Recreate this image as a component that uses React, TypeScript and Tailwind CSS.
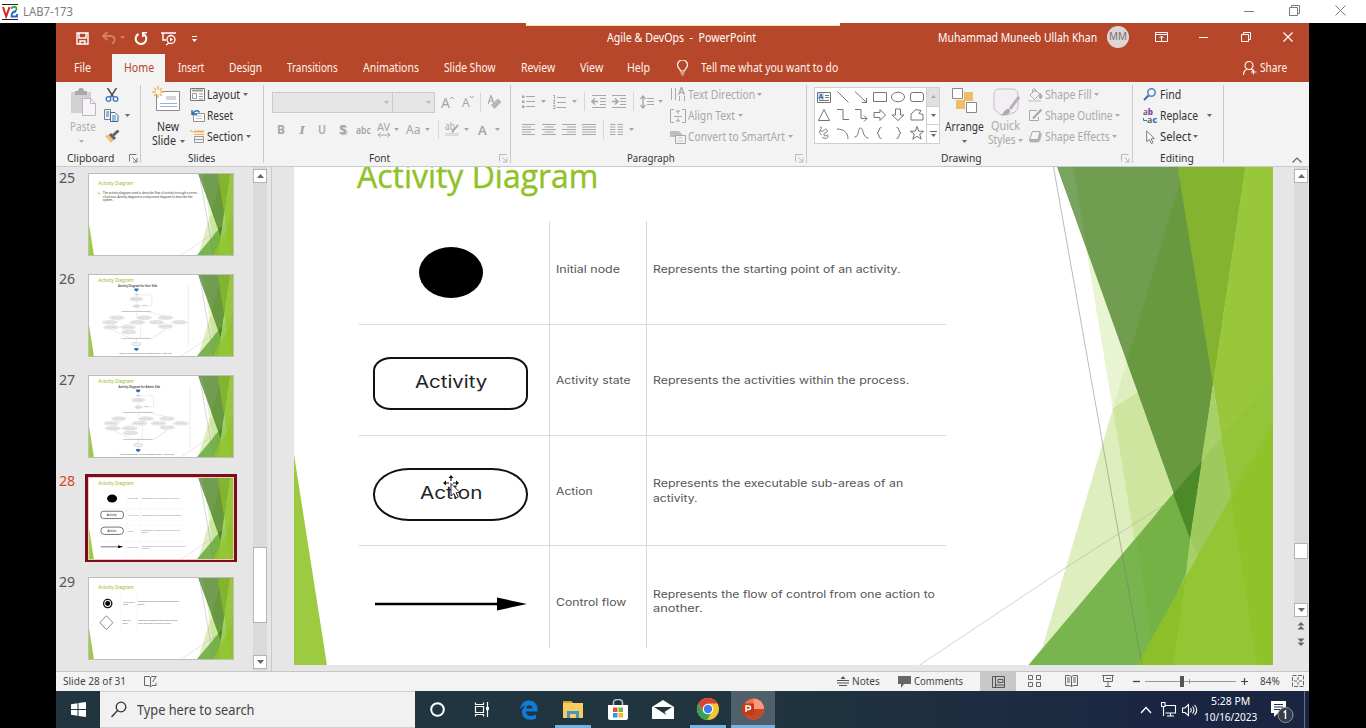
import React, { useLayoutEffect, useRef } from "react";

/* Text that is stretched or squeezed horizontally to fill the width of its box. */
function Fit({ className = "", children }: { className?: string; children: React.ReactNode }) {
  const box = useRef<HTMLSpanElement>(null);
  const inner = useRef<HTMLSpanElement>(null);
  useLayoutEffect(() => {
    if (!box.current || !inner.current) return;
    const k = box.current.clientWidth / inner.current.offsetWidth;
    inner.current.style.transform = `scaleX(${k})`;
  }, []);
  return (
    <span ref={box} className={`block shrink-0 whitespace-pre ${className}`}>
      <span ref={inner} className="inline-block origin-left">{children}</span>
    </span>
  );
}

type IconProps = { w: number; h: number; className?: string; children: React.ReactNode };
const Icon = ({ w, h, className = "", children }: IconProps) => (
  <svg width={w} height={h} viewBox={`0 0 ${w} ${h}`} fill="none" stroke="currentColor" className={`block shrink-0 ${className}`}>
    {children}
  </svg>
);

const Caret = ({ className = "" }: { className?: string }) => (
  <Icon w={5} h={3} className={className}><path d="M0 0h5L2.5 3z" fill="currentColor" stroke="none" /></Icon>
);
const Launcher = ({ className = "" }: { className?: string }) => (
  <Icon w={9} h={9} className={className}><path d="M.5 7.5v-7h7M3.5 3.500l4.500 4.500M8 4v4H4" /></Icon>
);
const Rule = () => <i className="mt-[3px] h-[78px] w-px shrink-0 bg-[#c9c9c9]" />;
const MiniRule = ({ className = "" }: { className?: string }) => <i className={`h-[19px] w-px shrink-0 bg-[#d6d6d6] ${className}`} />;

/* ---------- window chrome ---------- */
function ViewerBar() {
  return (
    <header className="flex h-[23px] items-center bg-white text-[#7b7b7b]">
      <Icon w={16} h={16} className="ml-[2px]">
        <path d="M0 .5h16M0 15.500h16" stroke="#222" />
        <path d="M1 3l3.200 9.500L7.500 3" stroke="#e02020" strokeWidth="2" />
        <path d="M9.500 5c0-3 5-3 5 0 0 2-2 2.500-2 2.500" stroke="#3aa648" strokeWidth="1.800" />
        <path d="M14 7.500c-3 0-4.500 1.500-4.500 5h5.500V10" stroke="#2368d8" strokeWidth="1.800" />
      </Icon>
      <Fit className="ml-[5px] w-[50px] text-[12px] leading-[16px]">LAB7-173</Fit>
      <Icon w={10} h={10} className="ml-auto mt-[-2px]"><path d="M0 5.500h10" /></Icon>
      <Icon w={11} h={11} className="ml-[35px] mt-[-3px]"><path d="M.5 2.500h8v8h-8zM2.500 2.500v-2h8v8h-2" /></Icon>
      <Icon w={11} h={11} className="ml-[35px] mr-[20px] mt-[-3px]"><path d="M.5.5l10 10M10.500.5l-10 10" /></Icon>
    </header>
  );
}

function TitleRow() {
  return (
    <div className="flex h-[29px] items-center text-white">
      <Icon w={13} h={13} className="ml-[20px] mt-[2px]"><path d="M1 1h11v11H1zM3 1v5h7V1M4 12V9h5v3" strokeWidth="1.400" /></Icon>
      <Icon w={14} h={12} className="ml-[13px] text-[#d48069]"><path d="M5.500 0L1 4l4.500 4M1 4h7c6 0 5.500 6 2 7.500" strokeWidth="2" /></Icon>
      <Caret className="ml-[4px] text-[#d48069]" />
      <Icon w={14} h={13} className="ml-[9px] mt-[1px]"><path d="M4.500 2A5.300 5.300 0 1 0 9 1.800" strokeWidth="2" /><path d="M8 0h5v1.500H9.700V5H8z" fill="currentColor" stroke="none" /></Icon>
      <Icon w={15} h={14} className="ml-[13px] mt-[2px]"><path d="M0 1h15M2 1v7h3M5 13l3-2" strokeWidth="1.400" /><circle cx="10" cy="7.500" r="4" strokeWidth="1.300" /><path d="M9 5.500v4l3-2z" fill="currentColor" stroke="none" /></Icon>
      <Icon w={5} h={6} className="ml-[16px] mt-[2px]"><path d="M0 .5h5" /><path d="M0 3h5L2.500 6z" fill="currentColor" stroke="none" /></Icon>
      <Fit className="ml-[410px] w-[149px] text-[12px]">{"Agile & DevOps  -  PowerPoint"}</Fit>
      <Fit className="ml-[182px] w-[159px] text-[12px]">Muhammad Muneeb Ullah Khan</Fit>
      <span className="ml-[10px] mt-[-2px] flex size-[22px] items-center justify-center rounded-full bg-[#dcd6d4] text-[#77706e]">
        <Fit className="w-[18px] text-[11px]">MM</Fit>
      </span>
      <Icon w={13} h={10} className="ml-[26px] mt-[-2px]"><path d="M.5.5h12v9H.5zM.5 2.500h12M6.500 9V4.500M4.500 6l2-2 2 2" /></Icon>
      <Icon w={10} h={10} className="ml-[31px] mt-[-2px]"><path d="M0 5.500h9" /></Icon>
      <Icon w={10} h={10} className="ml-[32px] mt-[-2px]"><path d="M.5 2.500h7v7h-7zM2.500 2.500v-2h7v7h-2" /></Icon>
      <Icon w={10} h={10} className="ml-[32px] mt-[-2px]"><path d="M.5.5l9 9M9.500.5l-9 9" strokeWidth="1.200" /></Icon>
    </div>
  );
}

function Tabs() {
  return (
    <nav className="flex h-[30px] items-end text-[12px] leading-[28px] text-[#fff3ef]">
      <Fit className="ml-[18px] w-[17px]">File</Fit>
      <span className="ml-[21px] flex h-[28px] w-[53px] justify-center bg-[#f3f3f3] text-[#b7472a]"><Fit className="w-[30px]">Home</Fit></span>
      <Fit className="ml-[13px] w-[26px]">Insert</Fit>
      <Fit className="ml-[25px] w-[33px]">Design</Fit>
      <Fit className="ml-[25px] w-[51px]">Transitions</Fit>
      <Fit className="ml-[25px] w-[56px]">Animations</Fit>
      <Fit className="ml-[25px] w-[52px]">Slide Show</Fit>
      <Fit className="ml-[25px] w-[34px]">Review</Fit>
      <Fit className="ml-[25px] w-[23px]">View</Fit>
      <Fit className="ml-[24px] w-[23px]">Help</Fit>
      <Icon w={11} h={16} className="mb-[6px] ml-[27px]"><path d="M3.500 11c0-2-3-3-3-6a5 5 0 0 1 10 0c0 3-3 4-3 6zM3.500 13h4M4.500 15h2" strokeWidth="1.200" /></Icon>
      <Fit className="ml-[13px] w-[137px]">Tell me what you want to do</Fit>
      <Icon w={14} h={14} className="mb-[7px] ml-[405px]"><circle cx="6" cy="4.500" r="4" strokeWidth="1.200" /><path d="M.5 14c0-3 1.500-5 3.500-6M8 8c1 .5 1.500 1 2 2M10.500 8.500v5M8 11h5.500" strokeWidth="1.200" /></Icon>
      <Fit className="ml-[3px] w-[27px]">Share</Fit>
    </nav>
  );
}

/* ---------- ribbon ---------- */
const GroupLabel = ({ children, pad, off }: { children: React.ReactNode; pad: string; off?: boolean | null }) => (
  <div className="mt-auto flex h-[18px] items-center pt-[2px] leading-[14px] text-[#333]">
    <span className={pad}>{children}</span>
    {off !== null && <Launcher className={`ml-auto mr-[2px] ${off ? "text-[#b9b9b9]" : "text-[#777]"}`} />}
  </div>
);
const Line = ({ children, className = "" }: { children: React.ReactNode; className?: string }) => (
  <div className={`flex h-[21px] items-center leading-[16px] ${className}`}>{children}</div>
);

function Clipboard() {
  return (
    <section className="flex w-[84px] flex-col pt-[2px]">
      <div className="flex">
        <div className="ml-[14px] w-[26px] text-[#b0b0b0]">
          <Icon w={26} h={28} className="mt-[4px]">
            <path d="M1 4h20v21H1z" fill="#d3d1d4" stroke="none" /><path d="M5 3h3a3 3 0 0 1 6 0h3v4H5z" fill="#a9a9a9" stroke="none" />
            <path d="M12.500 10.500h8l5 5v12h-13z" fill="#f6f4f6" stroke="#bdb8bd" /><path d="M20.500 10.500v5h5" stroke="#bdb8bd" />
          </Icon>
          <Fit className="mt-[3px] w-[26px] text-[12px] leading-[15px]">Paste</Fit>
          <Caret className="ml-[9px] mt-[6px]" />
        </div>
        <div className="ml-[8px]">
          <Line><Icon w={14} h={14} className="ml-px"><path d="M2.500 0l6 9M11.500 0l-6 9" stroke="#555" strokeWidth="1.600" /><circle cx="3.500" cy="11" r="2.300" stroke="#3b78c4" strokeWidth="1.300" /><circle cx="10.500" cy="11" r="2.300" stroke="#3b78c4" strokeWidth="1.300" /></Icon></Line>
          <Line>
            <Icon w={15} h={13}><path d="M.5.5h6v10h-6z" stroke="#76818f" /><path d="M2 3h3M2 5h3M2 7h3M8 6h3M8 8h4M8 10h4" stroke="#3b78c4" /><path d="M6.500 3.500h4.500l3 3v6H6.500z" stroke="#4a6588" fill="#f8faff" /><path d="M8 7h4M8 9h4M8 11h4" stroke="#3b78c4" /></Icon>
            <Caret className="ml-[6px] text-[#666]" />
          </Line>
          <Line><Icon w={15} h={14} className="ml-px"><path d="M0 6l5-2 5 5-4 4z" fill="#f0c078" stroke="none" /><path d="M5 4l5 5M8 5.500L13.500.500" stroke="#666" strokeWidth="3" /></Icon></Line>
        </div>
      </div>
      <GroupLabel pad="ml-[11px]"><Fit className="w-[47px] text-[11.500px]">Clipboard</Fit></GroupLabel>
    </section>
  );
}

function Slides() {
  return (
    <section className="flex w-[122px] flex-col pt-[2px] text-[12px] text-[#333]">
      <div className="flex">
        <div className="ml-[11px] w-[32px]">
          <Icon w={29} h={26} className="mt-[2px]">
            <path d="M4.500 5.500h23v19h-23z" fill="#fff" stroke="#8d8d8d" /><path d="M14 10h10v4H14z" fill="#d6d6d6" stroke="none" />
            <path d="M8 17.500h17M8 20.500h17" stroke="#9ab2d8" /><path d="M6 0v12M0 6h12M2 2l8 8M10 2l-8 8" stroke="#edb95e" strokeWidth="1.500" />
            <circle cx="6" cy="6" r="2.500" fill="#fff5da" stroke="none" />
          </Icon>
          <Fit className="ml-[5px] mt-[7px] w-[22px] leading-[15px]">New</Fit>
          <div className="flex items-center"><Fit className="w-[24px] leading-[14px]">Slide</Fit><Caret className="ml-[4px] text-[#666]" /></div>
        </div>
        <div className="ml-[6px]">
          <Line><Icon w={15} h={13}><path d="M.5.5h14v12H.5z" stroke="#777" fill="#fff" /><path d="M2 2.500h11" stroke="#999" strokeWidth="2" /><path d="M2.500 5.500h4v5h-4zM9 6h4M9 8.500h4M9 11h4" stroke="#999" /></Icon><Fit className="ml-[2px] w-[33px]">Layout</Fit><Caret className="ml-[3px] text-[#666]" /></Line>
          <Line><Icon w={15} h={14}><path d="M3.500 4.500h11v8h-11z" stroke="#8f8f8f" fill="#fff" /><path d="M6 7h6M6 9.500h6" stroke="#bbb" /><path d="M2 6V1M2 5.500h5M2.500 5C5 1 8 1 9.500 3.500" stroke="#3070b8" strokeWidth="1.500" /></Icon><Fit className="ml-[2px] w-[26px]">Reset</Fit></Line>
          <Line><Icon w={15} h={13}><path d="M4 1.500h10" stroke="#f0ae62" strokeWidth="2" /><path d="M4 4.500h10M0 0l3 2" stroke="#f0ae62" strokeWidth="1.200" /><path d="M4.500 6.500h9v6h-9zM5 9.500h8" stroke="#999" /></Icon><Fit className="ml-[2px] w-[36px]">Section</Fit><Caret className="ml-[3px] text-[#666]" /></Line>
        </div>
      </div>
      <GroupLabel pad="ml-[47px]" off={null}><Fit className="w-[27px] text-[11.500px]">Slides</Fit></GroupLabel>
    </section>
  );
}

function FontGroup() {
  return (
    <section className="flex w-[246px] flex-col pt-[3px] text-[#a6a6a6]">
      <div className="mt-[7px] flex h-[21px] items-center pl-[8px]">
        <span className="flex h-[21px] w-[121px] items-center justify-end border border-[#cacaca] bg-[#e6e6e6] pr-[3px] text-[#bababa]"><Caret /></span>
        <span className="flex h-[21px] w-[42px] items-center justify-end border border-l-0 border-[#cacaca] bg-[#e6e6e6] pr-[3px] text-[#bababa]"><Caret /></span>
        <Fit className="ml-[6px] w-[9px] text-[14px] leading-[16px]">A</Fit><Icon w={4} h={3} className="mb-[11px]"><path d="M0 3l2-2 2 2" /></Icon>
        <Fit className="ml-[8px] w-[8px] pt-[1px] text-[12px] leading-[16px]">A</Fit><Icon w={4} h={3} className="mb-[11px]"><path d="M0 0l2 2 2-2" /></Icon>
        <MiniRule className="ml-[6px]" />
        <Icon w={14} h={15} className="ml-[7px]"><path d="M0 9L3 .5 6 9M1.500 6h3" strokeWidth="1.200" /><path d="M3 10l7-6.500 3.500 3.500-7 7z" fill="#b5b5b5" stroke="none" /></Icon>
      </div>
      <div className="mt-[6px] flex h-[21px] items-center pl-[13px] text-[12px] leading-[16px]">
        <Fit className="w-[8px] font-bold">B</Fit>
        <Fit className="ml-[14px] w-[6px] font-['Liberation_Serif'] text-[13px] font-bold italic">I</Fit>
        <Fit className="ml-[13px] w-[8px] font-semibold underline underline-offset-2">U</Fit>
        <Fit className="ml-[13px] w-[8px] font-bold [text-shadow:1px_1px_1px_#bbb]">S</Fit>
        <Fit className="ml-[9px] w-[15px] text-[11px] font-semibold line-through">abc</Fit>
        <span className="ml-[6px] flex h-[16px] flex-col"><Fit className="w-[13px] text-[11px] leading-[10px]">AV</Fit><Icon w={14} h={6}><path d="M1 3h12M3.500.5L1 3l2.500 2.500M10.500.5L13 3l-2.500 2.500" /></Icon></span>
        <Caret className="ml-[3px]" />
        <Fit className="ml-[7px] w-[14px]">Aa</Fit>
        <Caret className="ml-[5px]" />
        <MiniRule className="ml-[8px]" />
        <span className="ml-[6px] flex h-[16px] flex-col"><Fit className="w-[10px] text-[10px] leading-[9px]">ab</Fit><i className="mt-[2px] h-[3px] w-[14px] bg-[#dcdcdc]" /></span>
        <Icon w={8} h={9} className="ml-[-8px] mb-[3px]"><path d="M7 1L2 7l-1 1.500" strokeWidth="1.800" /></Icon>
        <Caret className="ml-[5px]" />
        <Fit className="ml-[9px] w-[9px] text-[13px] font-semibold">A</Fit>
        <Caret className="ml-[8px]" />
      </div>
      <GroupLabel pad="ml-[105px]" off><Fit className="w-[21px] text-[11.500px]">Font</Fit></GroupLabel>
    </section>
  );
}

const Bars = ({ d }: { d: string }) => <Icon w={14} h={11}><path d={d} /></Icon>;

function Paragraph() {
  return (
    <section className="flex w-[295px] flex-col pt-[2px] text-[#a8a8a8]">
      <div className="flex h-[63px]">
        <div className="w-[159px]">
          <div className="mt-[7px] flex h-[21px] items-center pl-[10px]">
            <Icon w={14} h={14}><path d="M5 1.500h9M5 6.500h9M5 11.500h9" /><path d="M1 0.500h2.500V3H1zM1 5.500h2.500V8H1zM1 10.500h2.500V13H1z" fill="currentColor" stroke="none" /></Icon>
            <Caret className="ml-[6px]" />
            <Icon w={14} h={14} className="ml-[6px]"><path d="M5 2.500h9M5 7.500h9M5 12.500h9M1 .5h1.500v3.500M1 5.500h2l-1.500 3H3M1 10.500h2v3H1" /></Icon>
            <Caret className="ml-[6px]" />
            <MiniRule className="ml-[7px]" />
            <Icon w={16} h={13} className="ml-[6px]"><path d="M1 .5h14M9 3.500h6M9 6.500h6M9 9.500h6M1 12.500h14" /><path d="M7 6.500H1.500M4 3.500l-3 3 3 3" strokeWidth="1.600" /></Icon>
            <Icon w={16} h={13} className="ml-[4px]"><path d="M1 .5h14M9 3.500h6M9 6.500h6M9 9.500h6M1 12.500h14" /><path d="M1 6.500h6M4 3.500l3 3-3 3" strokeWidth="1.600" /></Icon>
            <MiniRule className="ml-[6px]" />
            <Icon w={14} h={14} className="ml-[6px]"><path d="M3 1v12M.5 4L3 1l2.500 3M.5 10L3 13l2.500-3" strokeWidth="1.300" /><path d="M7 3.500h7M7 6.500h7M7 9.500h7" /></Icon>
            <Caret className="ml-[4px]" />
          </div>
          <div className="mt-[7px] flex h-[21px] items-center gap-[6px] pl-[11px]">
            <Bars d="M0 .5h13M0 3h9M0 5.500h13M0 8h9M0 10.500h13" />
            <Bars d="M0 .5h14M2.500 3h9M0 5.500h14M2.500 8h9M0 10.500h14" />
            <Bars d="M0 .5h14M5 3h9M0 5.500h14M5 8h9M0 10.500h14" />
            <Bars d="M0 .5h14M0 3h14M0 5.500h14M0 8h14M0 10.500h14" />
            <MiniRule className="ml-px" />
            <Icon w={13} h={11}><path d="M0 .5h5.500M0 3h5.500M0 5.500h5.500M0 8h5.500M0 10.500h5.500M7.500.5H13M7.500 3H13M7.500 5.500H13M7.500 8H13M7.500 10.500H13" /></Icon>
            <Caret />
          </div>
        </div>
        <div className="text-[12px]">
          <Line><Icon w={16} h={15}><path d="M1.500 1v12M5.500 1v12M9.500 9v5M14.500 9v5" /><path d="M8.500 8L11.500 0l3 8M9.500 5.500h4" strokeWidth="1.300" /></Icon><Fit className="ml-[2px] w-[67px]">Text Direction</Fit><Caret className="ml-[2px]" /></Line>
          <Line><Icon w={16} h={14}><path d="M4 .5H.5v13H4M12 .5h3.500v13H12M8 1v4M8 9v4M6 3l2-2 2 2M6 11l2 2 2-2M4 7.500h8" /></Icon><Fit className="ml-[2px] w-[47px]">Align Text</Fit><Caret className="ml-[3px]" /></Line>
          <Line><Icon w={16} h={14}><path d="M0 1h9l3 3v3H0z" fill="#bdbdbd" stroke="none" /><path d="M5.500 5.500h10v8h-10z" fill="#f3f3f3" /><path d="M8 8h5M8 11h5" stroke="#ccc" /></Icon><Fit className="ml-[2px] w-[97px]">Convert to SmartArt</Fit><Caret className="ml-[3px]" /></Line>
        </div>
      </div>
      <GroupLabel pad="ml-[116px]" off><Fit className="w-[48px] text-[11.500px]">Paragraph</Fit></GroupLabel>
    </section>
  );
}

const shapePaths = [
  "M1.500 3.500h13v10h-13zM9 6.500h4M9 8.500h4M3 11.500h10",
  "M2.500 2.500l11 11",
  "M2 2.500l11.500 11M13.500 9v4.500H9",
  "M1.500 3.500h13v9h-13z",
  "M1.500 8a6.500 4.800 0 1 0 13 0a6.500 4.800 0 1 0-13 0",
  "M3.500 3.500h9q2 0 2 2.500v4q0 2.500-2 2.500h-9q-2 0-2-2.500V6q0-2.500 2-2.500",
  "M8 2.500l5.500 11h-11z",
  "M2 2.500h6v10h6",
  "M2 2.500h6v9h6M11 8.500l3 3-3 3",
  "M2 5.500h6V2.500l5.500 5.500L8 13.500v-3H2z",
  "M5.500 2v6h-3.500l6 5.500 6-5.500h-3.500V2z",
  "M2 13V7l5-4.500 5 1-2 3 4 1v5.500z",
  "M4 2c5 1-3 3 1 4s4-4 6-1-4 2-3 5 4-2 4 1-4 3-6 1M4 6c-2 2 1 3 2 4",
  "M2 4c6 0 11 3 11 10",
  "M1.500 12c5 0 3-9 6-9s2 10 8 10",
  "M9.500 2.500Q7 2.500 7 5t-2 3q2 .5 2 3t2.500 2.500",
  "M6.500 2.500Q9 2.500 9 5t2 3q-2 .5-2 3t-2.500 2.500",
  "M8 1.500l1.700 4.700h5l-4 3 1.500 5L8 11.300 3.800 14.200l1.500-5-4-3h5z",
];

function Drawing() {
  return (
    <section className="flex w-[325px] flex-col pt-[2px] text-[12px]">
      <div className="flex h-[63px]">
        <div className="ml-[7px] mt-[3px] flex h-[57px] w-[126px] border border-[#cfcfcf] bg-white">
          <div className="grid w-[111px] grid-cols-6 grid-rows-3 place-items-center pb-px text-[#747474]">
            {shapePaths.map((d, i) => <Icon key={i} w={16} h={16}>{i === 0 && <path d="M2 4h6v7H2z" fill="#cfdcf0" stroke="none" />}<path d={d} />{i === 0 && <path d="M3 10l2-5 2 5M4 8.500h2.500" stroke="#2b5fa8" />}</Icon>)}
          </div>
          <div className="flex flex-1 flex-col divide-y divide-[#cfcfcf] border-l border-[#cfcfcf] text-[#666]">
            <span className="flex flex-1 items-center justify-center bg-[#e0e0e0] text-[#aaa]"><Caret className="rotate-180" /></span>
            <span className="flex flex-1 items-center justify-center"><Caret /></span>
            <span className="flex flex-1 flex-col items-center justify-center gap-[2px]"><i className="h-px w-[7px] bg-[#666]" /><Caret /></span>
          </div>
        </div>
        <div className="ml-[5px] flex w-[39px] flex-col items-center text-[#333]">
          <Icon w={25} h={25} className="mt-[4px]"><path d="M12 4h9v9h-9zM4 12h9v9H4z" fill="#eebd68" stroke="none" /><path d="M.5.5h10v10H.500zM14.500 14.500h10v10h-10z" fill="#fff" stroke="#888" /></Icon>
          <Fit className="mt-[6px] w-[39px] leading-[15px]">Arrange</Fit>
          <Caret className="mt-[6px] text-[#666]" />
        </div>
        <div className="ml-[4px] w-[36px] text-[#a9a9a9]">
          <Icon w={27} h={28} className="ml-[5px] mt-[4px]"><path d="M6 1h13q6 0 6 6v11q0 4-3 6L14 27H8l-7-6V6q0-5 5-5z" fill="#f4eff5" stroke="#c7bcc8" /><path d="M26 9l-9 12M26.500 8" stroke="#b5b5b5" strokeWidth="3" /><path d="M7 27c4 0 4-7 9-6 3 3-1 7-9 6z" fill="#a9a9a9" stroke="none" /></Icon>
          <Fit className="ml-[3px] mt-[3px] w-[29px] leading-[14px]">Quick</Fit>
          <div className="flex items-center"><Fit className="w-[28px] leading-[14px]">Styles</Fit><Caret className="ml-[2px]" /></div>
        </div>
        <div className="ml-[4px] text-[#a9a9a9]">
          <Line><Icon w={15} h={14}><path d="M7 2L2 7l4.500 4.500L12 6zM4.500 5V1.500q2-2 3 0V4" /><path d="M12.500 5.500q3 4 0 5-2 0 0-5" fill="#aaa" /><path d="M0 12h13v2H0z" fill="#d8d8d8" stroke="none" /></Icon><Fit className="ml-[2px] w-[47px]">Shape Fill</Fit><Caret className="ml-[2px]" /></Line>
          <Line><Icon w={15} h={13}><path d="M9 1.500H1.500v10h9V8" /><path d="M13.500.5L5 9.500" strokeWidth="2.200" /></Icon><Fit className="ml-[2px] w-[68px]">Shape Outline</Fit><Caret className="ml-[2px]" /></Line>
          <Line><Icon w={15} h={13}><path d="M4 2h8l2 2-2 7-2 1.500H2L1 10z" fill="#b5b5b5" stroke="none" /><path d="M4.500 1.500h7.500l-2 8H1.500z" fill="#f5f5f5" strokeLinejoin="round" /></Icon><Fit className="ml-[2px] w-[65px]">Shape Effects</Fit><Caret className="ml-[2px]" /></Line>
        </div>
      </div>
      <GroupLabel pad="ml-[134px]" off><Fit className="w-[41px] text-[11.500px]">Drawing</Fit></GroupLabel>
    </section>
  );
}

function Editing() {
  return (
    <section className="flex w-[90px] flex-col pt-[2px] text-[12px] text-[#333]">
      <Line className="pl-[10px]"><Icon w={14} h={13}><circle cx="8.500" cy="4.500" r="3.700" stroke="#4c86cf" strokeWidth="1.600" /><path d="M5.500 7.500L1 12" stroke="#4c6ea8" strokeWidth="2.200" /></Icon><Fit className="ml-[3px] w-[21px]">Find</Fit></Line>
      <Line className="pl-[10px]">
        <span className="flex w-[14px] flex-col text-[9px] leading-[8px]"><Fit className="w-[10px] font-semibold text-[#555]">a<b className="text-[#8650a8]">b</b></Fit><span className="flex"><Icon w={4} h={5} className="mt-[2px]"><path d="M.5 0v2.500H4" stroke="#3b78c4" /></Icon><Fit className="w-[10px] font-semibold text-[#555]">a<b className="text-[#3b78c4]">c</b></Fit></span></span>
        <Fit className="ml-[3px] w-[38px]">Replace</Fit><Caret className="ml-[9px] text-[#666]" />
      </Line>
      <Line className="pl-[13px]"><Icon w={9} h={14}><path d="M.7 1v10.500l2.600-2 2 4 1.700-.8-1.900-3.900 3.200-.3z" stroke="#777" fill="#fff" /></Icon><Fit className="ml-[5px] w-[31px]">Select</Fit><Caret className="ml-[2px] text-[#666]" /></Line>
      <GroupLabel pad="ml-[27px]" off={null}><Fit className="w-[34px] text-[11.500px]">Editing</Fit></GroupLabel>
    </section>
  );
}

function Ribbon() {
  return (
    <div className="flex h-[85px] border-b border-[#c9c9c9] bg-[#f3f3f3]">
      <Clipboard /><Rule /><Slides /><Rule /><FontGroup /><Rule /><Paragraph /><Rule /><Drawing /><Rule /><Editing /><Rule />
      <Icon w={10} h={6} className="ml-auto mr-[7px] mt-[75px] text-[#666]"><path d="M.5 5.500L5 1l4.500 4.500" strokeWidth="1.200" /></Icon>
    </div>
  );
}

/* ---------- slides ---------- */
function Facets({ thin = 1 }: { thin?: number }) {
  return (
    <g transform="translate(-294 -114.500)" stroke="none">
      <path d="M1064 114l91 552h119V114z" fill="#e9f4d3" />
      <path d="M1200 114L1037 666h237V114z" fill="#deeebf" />
      <path d="M1113 409l42 257h119V300z" fill="#cde59f" />
      <path d="M1038 114h215l-63 425z" fill="#719d50" />
      <path d="M1038 114h26l23 136z" fill="#78a45f" />
      <path d="M1200 114l-73 248 63 177 63-425z" fill="#68993e" />
      <path d="M1169 114l44 271 40-271z" fill="#84b330" />
      <path d="M1253 114l-40 271 18 112 43 60V114z" fill="#99c73b" />
      <path d="M1213 385l-42 281 60-169z" fill="#a7d168" />
      <path d="M1028 666l145-171.500 17 44.500-4 36-40 91z" fill="#79b54e" />
      <path d="M1137 540l22-29 14-16.500 17 44.500-5 34-32 80z" fill="#75b245" />
      <path d="M1173 494.500l29-33-12 77.500z" fill="#4c8927" />
      <path d="M1202 461.500l19.500-23.500 10 59-33 60-8-18z" fill="#9eca5d" />
      <path d="M1221.500 438l52.500-61v90l-42.500 30z" fill="#94c439" />
      <path d="M1137 666L1274 421v245z" fill="#8fc329" />
      <path d="M1137 666l49-89-13 89z" fill="#8bc02b" />
      <path d="M1186 577l45-80 26 169h-84z" fill="#94c534" />
      <path d="M1044 114l98 552" fill="none" stroke="#777" strokeOpacity=".5" strokeWidth={thin} />
      <path d="M919 666l147-98 100-64" fill="none" stroke="#a9a9a9" strokeOpacity=".5" strokeWidth={thin} />
      <path d="M294 455l33 211h-33z" fill="#9ccb42" />
    </g>
  );
}

const rows = [
  { name: "Initial node", nw: "w-[64px]", lines: [["Represents the starting point of an activity.", "w-[248px]"]], h: "h-[104px]", namePad: "pb-[4px]", textPad: "pb-[4px]" },
  { name: "Activity state", nw: "w-[75px]", lines: [["Represents the activities within the process.", "w-[256px]"]], h: "h-[111px]", namePad: "pt-[3px]", textPad: "pt-[3px]" },
  { name: "Action", nw: "w-[37px]", lines: [["Represents the executable sub-areas of an", "w-[250px]"], ["activity.", "w-[44px]"]], h: "h-[110px]", namePad: "pt-[4px]", textPad: "pt-[2px]" },
  { name: "Control flow", nw: "w-[70px]", lines: [["Represents the flow of control from one action to", "w-[282px]"], ["another.", "w-[49px]"]], h: "h-[102px]", namePad: "pt-[12px]", textPad: "pt-[10px]" },
];

function Symbol({ i }: { i: number }) {
  if (i === 0) return <span className="h-[51px] w-[64px] rounded-[50%] bg-black" />;
  if (i === 3) return <Icon w={152} h={14} className="mt-[14px]"><path d="M0 7h125" stroke="#000" strokeWidth="2.400" /><path d="M122 .5L152 7l-30 6.500z" fill="#000" stroke="none" /></Icon>;
  return (
    <span className={`mr-px flex w-[155px] items-center justify-center border-2 border-[#111] ${i === 1 ? "mt-[6px] h-[53px] rounded-[18px/14px]" : "mt-[7px] h-[53px] rounded-[36px/26px]"}`}>
      <Fit className={`mt-[-2px] text-[17px] leading-[20px] text-[#222] ${i === 1 ? "w-[72px]" : "w-[62px]"}`}>{i === 1 ? "Activity" : "Action"}</Fit>
    </span>
  );
}

function MainSlide() {
  return (
    <div className="relative h-[498px] w-[979px] overflow-hidden bg-white">
      <svg width="980" height="551" viewBox="0 0 980 551" className="absolute bottom-0 left-0"><Facets /></svg>
      <div className="relative pl-[63px] font-['Open_Sans']"><Fit className="mt-[-13px] w-[241px] text-[33px] leading-[44px] text-[#90c226] [-webkit-text-stroke:0.4px_#90c226]">Activity Diagram</Fit></div>
      <div className="relative ml-[65px] mt-[23px] w-[587px] font-['Inter'] text-[10.500px] leading-[14.500px] text-[#555]">
        {rows.map((r, i) => (
          <div key={r.name} className={`flex ${r.h} ${i < 3 ? "border-b border-[#d9d9d9]" : ""}`}>
            <div className="flex w-[184px] shrink-0 items-center justify-center"><Symbol i={i} /></div>
            <div className={`ml-[6px] flex w-[97px] items-center border-l border-[#d9d9d9] pl-[6px] ${r.namePad}`}><Fit className={r.nw}>{r.name}</Fit></div>
            <div className={`flex flex-1 flex-col justify-center border-l border-[#d9d9d9] pl-[6px] ${r.textPad}`}>
              {r.lines.map(([t, w]) => <Fit key={t} className={w}>{t}</Fit>)}
            </div>
          </div>
        ))}
      </div>
      <svg width="18" height="24" viewBox="0 0 18 24" className="absolute left-[149px] top-[308px]">
        <path d="M8 0l2.500 3h-5zM0 8l3-2.500v5zM16 8l-3-2.500v5z" fill="#111" /><path d="M8 2v4M2 8h4M10 8h4" stroke="#111" strokeWidth="1.200" />
        <path d="M8 8.500v12.500l3-2.500 2 4.500 2.200-1-2-4.300 3.800-.2z" fill="#fff" stroke="#111" strokeWidth=".9" />
      </svg>
    </div>
  );
}

const small = "'Noto Sans', sans-serif";
const bubbles = [[190, 290], [375, 290], [520, 290], [140, 322], [330, 322], [460, 322], [615, 322], [150, 356], [265, 356], [520, 350], [270, 388]];

function FlowArt({ name, shift }: { name: string; shift: number }) {
  return (
    <g fontFamily={small} transform={`translate(${shift} 0)`}>
      <text x="330" y="82" textAnchor="middle" fontSize="18" fontWeight="bold" fill="#555">{`Activity Diagram for ${name} Side`}</text>
      <g stroke="#c2c2c2" strokeWidth="3" fill="#f1f1f1">
        <path d="M322 105v125M322 135h105v75h-95M230 248h190M400 250L540 285M322 250v30M210 300L150 350M370 300l-180 60M560 330l-120 100M350 330v100M150 370l130 60h150l90-60M322 430v60M675 70v420" fill="none" stroke="#d5d5d5" />
        <path d="M220 248h200M220 432h200" stroke="#aaa" strokeWidth="4" />
        {bubbles.map(([x, y], i) => <ellipse key={i} cx={x} cy={y} rx="50" ry="12" />)}
        <ellipse cx="322" cy="164" rx="46" ry="12" /><ellipse cx="322" cy="212" rx="24" ry="9" /><ellipse cx="322" cy="470" rx="34" ry="12" />
      </g>
      <g stroke="#666" strokeOpacity=".6" strokeWidth="3">
        {bubbles.map(([x, y], i) => <path key={i} d={`M${x - 34} ${y}h68`} strokeDasharray="12 4 20 5" />)}
        <path d="M290 164h62M308 133h30M308 212h28M365 207h30" />
      </g>
      <path d="M308 92h28v12l-14 8-14-8zM308 497h28v12l-14 8-14-8z" fill="#2f6fb5" />
      <text x="380" y="537" textAnchor="middle" fontSize="14" fill="#555">{`Activity diagram for online language system - ${name} side`}</text>
    </g>
  );
}

function ThumbArt({ n }: { n: number }) {
  const high = n === 26 || n === 27;
  return (
    <svg width="144" height="81" viewBox="0 0 979 551" className="block bg-white" fontFamily={small}>
      <Facets thin={4} />
      <text x="63" y={high ? 46 : n === 28 ? 50 : 75} fontSize="32" textLength="241" fill="#90c226">Activity Diagram</text>
      {n === 25 && (
        <g fontSize="21" fill="#444">
          <path d="M64 124l14 7-14 7z" fill="#90c226" />
          <text x="94" y="139" textLength="640">The activity diagram used to describe flow of activity through a series</text>
          <text x="94" y="163" textLength="610">of actions. Activity diagram is a important diagram to describe the</text>
          <text x="94" y="183" textLength="68">system.</text>
        </g>
      )}
      {n === 26 && <FlowArt name="User" shift={0} />}
      {n === 27 && <FlowArt name="Admin" shift={12} />}
      {n === 28 && (
        <g fontSize="13" fill="#777">
          <path d="M65 210h585M65 321h585M65 431h585M255 107v425M352 107v425" stroke="#ececec" strokeWidth="3" />
          <ellipse cx="157" cy="140" rx="34" ry="27" fill="#000" />
          <rect x="80" y="226" width="154" height="50" rx="18" fill="none" stroke="#444" strokeWidth="5" />
          <rect x="80" y="334" width="154" height="50" rx="26" fill="none" stroke="#444" strokeWidth="5" />
          <path d="M80 468h130" stroke="#444" strokeWidth="5" /><path d="M198 458l34 10-34 10z" fill="#000" />
          <text x="121" y="259" fontSize="20" fill="#222">Activity</text><text x="126" y="366" fontSize="20" fill="#222">Action</text>
          {rows.map((r, i) => (
            <g key={r.name} transform={`translate(0 ${146 + i * 110})`}>
              <text x="262">{r.name}</text>
              {r.lines.map(([t], k) => <text key={t} x="360" y={k * 15 - (r.lines.length - 1) * 7}>{t}</text>)}
            </g>
          ))}
        </g>
      )}
      {n === 29 && (
        <g fontSize="14" fill="#666">
          <circle cx="127" cy="174" r="28" fill="#fff" stroke="#111" strokeWidth="9" /><circle cx="127" cy="174" r="17" fill="#000" />
          <path d="M118 257l44 47-44 47-44-47z" fill="none" stroke="#333" strokeWidth="4" />
          <path d="M325 120v260M215 120v260" stroke="#f0f0f0" strokeWidth="3" />
          <text x="232" y="168">Final activity</text><text x="232" y="184">node</text>
          <text x="332" y="166" textLength="280">Represents the end of all control flows within the</text><text x="332" y="182">activity.</text>
          <text x="228" y="294">Decision</text><text x="228" y="312">node</text>
          <text x="332" y="294" textLength="270">Represents a conditional branch point with one</text><text x="332" y="312">input and several possible outputs.</text>
        </g>
      )}
    </svg>
  );
}

const ScrollButton = ({ up, className = "" }: { up?: boolean; className?: string }) => (
  <span className={`flex h-[14px] shrink-0 items-center justify-center border border-[#b5b5b5] bg-white text-[#666] ${className}`}>
    <Icon w={7} h={4} className={up ? "rotate-180" : ""}><path d="M0 0h7L3.500 4z" fill="currentColor" stroke="none" /></Icon>
  </span>
);

function SlidePane() {
  return (
    <aside className="flex h-[504px] w-[216px] border-r border-[#c9c9c9]">
      <div className="w-[197px] pt-[6px]">
        {[25, 26, 27, 28, 29].map((n) => (
          <div key={n} className="flex h-[101px] pl-[3px]">
            <Fit className={`mt-[-6px] w-[16px] text-[15px] leading-[20px] ${n === 28 ? "text-[#d24726]" : "text-[#555]"}`}>{n}</Fit>
            <div className={n === 28 ? "ml-[10px] mt-[-2px] h-[88px] w-[152px] border-[3px] border-[#7c0d1d]" : "ml-[13px] h-[83px] w-[146px]"}>
              <div className={n === 28 ? "border border-[#f3c9c0] " : "border border-[#bdbdbd]"}><ThumbArt n={n} /></div>
            </div>
          </div>
        ))}
      </div>
      <div className="flex w-[14px] flex-col bg-[#dadada] pt-[2px]">
        <ScrollButton up />
        <span className="mt-[364px] h-[76px] border border-[#b5b5b5] bg-white" />
        <ScrollButton className="mt-[32px]" />
      </div>
    </aside>
  );
}

function Workspace() {
  return (
    <div className="flex h-[504px] bg-[#e6e6e6]">
      <SlidePane />
      <main className="ml-[22px] w-[979px]"><MainSlide /></main>
      <div className="ml-[21px] flex w-[14px] flex-col">
        <div className="flex h-[450px] flex-col bg-[#dadada] pt-[2px]">
          <ScrollButton up />
          <span className="mt-[360px] h-[16px] border border-[#b5b5b5] bg-white" />
          <ScrollButton className="mt-auto" />
        </div>
        <Icon w={8} h={8} className="ml-[3px] mt-[5px]"><path d="M4 0l3.500 3.500h-7zM4 4l3.500 3.500h-7z" fill="#666" stroke="none" /></Icon>
        <Icon w={8} h={8} className="ml-[3px] mt-[8px]"><path d="M4 4L.5.5h7zM4 8L.5 4.500h7z" fill="#666" stroke="none" /></Icon>
      </div>
    </div>
  );
}

/* ---------- bottom bars ---------- */
function StatusBar() {
  return (
    <footer className="flex h-[20px] items-center border-t border-[#c6c6c6] bg-[#f3f3f3] pb-px text-[11.500px] leading-[16px] text-[#444]">
      <Fit className="ml-[7px] w-[63px]">Slide 28 of 31</Fit>
      <Icon w={14} h={13} className="ml-[18px] text-[#666]"><path d="M6.500 2.500L5 1.500H.5v9H5l1.500 1.500 1.500-1.500h4V8M6.500 2.500V12M6.500 2.500L8 1.500h4M12.500 1l-4 6" /></Icon>
      <Icon w={12} h={10} className="ml-[679px] text-[#555]"><path d="M0 4.500h12M0 7h12M2 9.500h8" /><path d="M3.500 3L6 0l2.500 3z" fill="currentColor" stroke="none" /></Icon>
      <Fit className="ml-[3px] w-[28px]">Notes</Fit>
      <Icon w={13} h={13} className="ml-[18px]"><path d="M0 1h13v8H6l-3 4V9H0z" fill="#666" stroke="none" /></Icon>
      <Fit className="ml-[3px] w-[49px]">Comments</Fit>
      <span className="ml-[17px] mt-px flex h-[19px] w-[36px] items-center justify-center bg-[#c8c8c8]"><Icon w={13} h={12} className="text-[#555]"><path d="M.5.5h12v11H.500zM3.500.5v11M6 3.500h5v3H6zM3.500 9h9" /></Icon></span>
      <Icon w={13} h={12} className="ml-[12px] text-[#666]"><path d="M.5.5h4v4h-4zM8.500.5h4v4h-4zM.5 7.500h4v4h-4zM8.500 7.500h4v4h-4z" /></Icon>
      <Icon w={13} h={12} className="ml-[24px] text-[#666]"><path d="M.5.5h4l2 1 2-1h4v10h-4l-2 1-2-1h-4zM6.500 1.500v10M2 3h3M2 5h3M2 7h3M8 3h3M8 5h3M8 7h3" /></Icon>
      <Icon w={12} h={12} className="ml-[24px] text-[#666]"><path d="M0 .5h12M1.500 1v5.500h9V1M6 7v4M3 11.500h6M4 3.500h5" /></Icon>
      <Icon w={7} h={7} className="ml-[19px]"><path d="M0 3.500h7" strokeWidth="1.300" /></Icon>
      <Icon w={91} h={11} className="ml-[5px]"><path d="M0 5.500h91M44.500 3v5" stroke="#9a9a9a" /><path d="M35 0h4v11h-4z" fill="#555" stroke="none" /></Icon>
      <Icon w={7} h={7} className="ml-[5px]"><path d="M0 3.500h7M3.500 0v7" strokeWidth="1.200" /></Icon>
      <Fit className="ml-[12px] w-[20px]">84%</Fit>
      <Icon w={12} h={12} className="ml-[12px] text-[#666]"><path d="M.5.5h11v11H.5zM6 2v3M6 7v3M2 6h3M7 6h3" strokeDasharray="4 1.500" /></Icon>
    </footer>
  );
}

function Taskbar() {
  return (
    <div className="flex h-[37px] items-center bg-linear-to-r from-[#20353f] from-55% to-[#1a2542] to-90% text-white">
      <span className="flex w-[44px] justify-center"><Icon w={15} h={15}><path d="M0 2.200L6.500 1.200V7H0zM7.500 1L15 0v7H7.500zM0 8h6.500v5.800L0 12.800zM7.500 8H15v7l-7.500-1z" fill="#fff" stroke="none" /></Icon></span>
      <div className="flex h-[37px] w-[315px] items-center border-y border-[#cfcfcf] bg-[#f1f1f1] text-[#444]">
        <Icon w={16} h={17} className="ml-[11px] text-[#333]"><circle cx="10" cy="6" r="4.800" strokeWidth="1.300" /><path d="M6.500 9.500L.5 16" strokeWidth="1.300" /></Icon>
        <Fit className="ml-[10px] w-[117px] text-[14.500px]">Type here to search</Fit>
      </div>
      <span className="flex w-[45px] justify-center"><Icon w={15} h={15}><circle cx="7.500" cy="7.500" r="6.300" strokeWidth="2" /></Icon></span>
      <span className="flex w-[43px] justify-center"><Icon w={16} h={15}><path d="M1.500.5v2h8v-2M1.500 14.500v-2h8v2M1.500 4.500h8v6h-8zM13.500 0v15" strokeWidth="1.200" /><path d="M12 5h3v3h-3z" fill="#fff" stroke="none" /></Icon></span>
      <span className="ml-[3px] flex w-[44px] justify-center"><Icon w={19} h={20}><path d="M1 9C2 3 6 .5 10 .5c6 0 8.500 4.500 8.500 8.500v2.500H7c0 5 6.500 5.500 10 3v4C10 21.500 3 19 3 12c0-3 2-5 4-6.200C4.500 6 2.500 7 1 9zM7 8.500h6.500C13.500 4 7.500 4 7 8.500z" fill="#0f7cd8" fillRule="evenodd" stroke="none" /></Icon></span>
      <span className="flex h-[37px] w-[45px] flex-col items-center justify-end">
        <Icon w={20} h={18} className="mb-[7px]"><path d="M0 1h8l2 2h10v15H0z" fill="#f7ce5c" stroke="none" /><path d="M0 1h8l2 2H0z" fill="#d89c2c" stroke="none" /><path d="M4 18v-7h12v7h-3v-4H7v4z" fill="#4596c8" stroke="none" /></Icon>
        <i className="h-[3px] w-[36px] bg-[#76b2e4]" />
      </span>
      <span className="flex w-[45px] justify-center"><Icon w={20} h={22}><path d="M5.500 6V3.500q0-3 4.500-3t4.500 3V6" stroke="#b9c3c8" strokeWidth="1.600" /><path d="M0 6h20v13q0 2-2 2H2q-2 0-2-2z" fill="#fff" stroke="none" /><path d="M5 8.500h4.500V13H5z" fill="#e8532b" stroke="none" /><path d="M10.500 8.500H15V13h-4.500z" fill="#7db83a" stroke="none" /><path d="M5 14h4.500v4.500H5z" fill="#2f9be0" stroke="none" /><path d="M10.500 14H15v4.500h-4.500z" fill="#f8b91c" stroke="none" /></Icon></span>
      <span className="flex w-[45px] justify-center"><Icon w={22} h={19}><path d="M0 7L11 0l11 7v12H0z" fill="#fff" stroke="none" /><path d="M2 7h18l-7.500 5 2 3z" fill="#20353f" stroke="none" /></Icon></span>
      <span className="flex h-[37px] w-[46px] flex-col items-center justify-end">
        <Icon w={22} h={22} className="mb-[5px]">
          <circle cx="11" cy="11" r="11" fill="#f2c534" stroke="none" /><path d="M1.500 5.500A11 11 0 0 1 20.500 5.500H11L6.300 13.700z" fill="#dc4234" stroke="none" />
          <path d="M1.500 5.500A11 11 0 0 0 10 22l4.500-7.500H6.500z" fill="#35a253" stroke="none" /><circle cx="11" cy="11" r="5.300" fill="#fff" stroke="none" /><circle cx="11" cy="11" r="4.200" fill="#3f7de8" stroke="none" />
        </Icon>
        <i className="h-[3px] w-[36px] bg-[#76b2e4]" />
      </span>
      <span className="flex h-[37px] w-[44px] flex-col items-center justify-between bg-[#50606a]">
        <Icon w={22} h={22} className="mt-[7px]"><circle cx="11.500" cy="11" r="10.500" fill="#ef7350" stroke="none" /><path d="M11.500.5A10.500 10.500 0 0 1 22 11H11.500z" fill="#f99a78" stroke="none" /><path d="M1 11h21a10.500 10.500 0 0 1-21 0z" fill="#cc4526" stroke="none" /><path d="M0 5.500h12v11.500H0z" fill="#c13b1b" stroke="none" /><path d="M4 14V8h2.500q2 0 2 1.700t-2 1.800H4" stroke="#fff" strokeWidth="1.500" /></Icon>
        <i className="h-[3px] w-full bg-[#76b2e4]" />
      </span>
      <Icon w={12} h={8} className="ml-[365px]"><path d="M1 7l5-5.500L11 7" strokeWidth="1.400" /></Icon>
      <Icon w={16} h={15} className="ml-[9px]"><path d="M4.500 3.500h10v7.500h-10M9.500 11v3M6 14h7M.5.5h3.500v4H.5zM2.500 4.500v9.500" strokeWidth="1.100" /></Icon>
      <Icon w={16} h={14} className="ml-[5px]"><path d="M.5 5h2.500l3.500-3.500v11L3 9.500H.5zM8.500 5q1.500 2 0 4.500M10.500 3.500q3 3.500 0 7M12.500 2q4.500 5 0 10" strokeWidth="1.100" /></Icon>
      <div className="ml-[6px] flex flex-col items-center pb-[2px] text-[11.500px] leading-[16px]"><Fit className="w-[39px]">5:28 PM</Fit><Fit className="w-[53px]">10/16/2023</Fit></div>
      <Icon w={24} h={24} className="ml-[14px] mt-[4px]"><path d="M0 1h15v12H7l-4 4v-4H0z" fill="#fff" stroke="none" /><path d="M3 4.500h9M3 7h9M3 9.500h6" stroke="#20304a" /><circle cx="14.500" cy="15" r="7.500" fill="#333c48" stroke="#8b949c" /><path d="M12.500 12.500l2-1.500v8" strokeWidth="1.400" /></Icon>
      <i className="ml-auto mr-[4px] h-[37px] w-px bg-[#65708a]" />
    </div>
  );
}

export default function App() {
  return (
    <div className="h-[728px] w-[1366px] overflow-hidden bg-black font-['Noto_Sans','Open_Sans',sans-serif]">
      <ViewerBar />
      <div className="ml-[56px] h-[705px] w-[1253px]">
        <div className="relative h-[59px] bg-[#b7472a]">
          <i className="absolute left-[470px] top-0 h-[3px] w-[314px] border-b border-[#f5e3b0] bg-white" />
          <TitleRow />
          <Tabs />
        </div>
        <Ribbon />
        <Workspace />
        <StatusBar />
        <Taskbar />
      </div>
    </div>
  );
}
